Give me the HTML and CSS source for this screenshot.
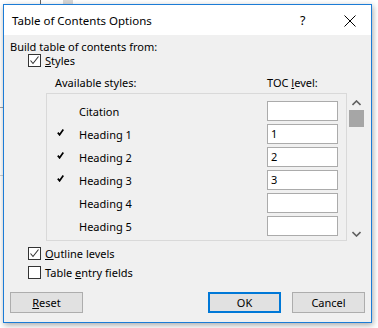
FILE: index.html
```html
<!DOCTYPE html>
<html>
<head>
<meta charset="utf-8">
<link rel="stylesheet" href="styles.css">
</head>
<body>
<div class="backdrop">
  <div class="bg-line bg-top1"></div>
  <div class="bg-line bg-top2"></div>
  <div class="bg-line bg-left1"></div>
  <div class="bg-line bg-left2"></div>
</div>
<div class="dialog">
  <div class="titlebar">
    <span class="title">Table of Contents Options</span>
    <span class="help">?</span>
    <svg class="close" width="12" height="12" viewBox="0 0 12 12"><path d="M0.5 0.5 L11.5 11.5 M11.5 0.5 L0.5 11.5" stroke="#000" stroke-width="1" fill="none"/></svg>
  </div>
  <div class="content">
    <div class="label-line">Build table of contents from:</div>
    <div class="check-row styles-row">
      <span class="box"><svg width="11" height="11" viewBox="0 0 11 11"><path d="M1.5 5.5 L4 8.5 L9.5 1.5" stroke="#333" stroke-width="1.1" fill="none"/></svg></span>
      <span><u>S</u>tyles</span>
    </div>
    <div class="col-heads">
      <span class="avail">Available styles:</span>
      <span class="toc">TOC <u>l</u>evel:</span>
    </div>
    <div class="list-wrap">
      <div class="list">
        <div class="row"><span class="mark"></span><span class="name">Citation</span><span class="field"></span></div>
        <div class="row"><span class="mark"><svg width="7" height="7" viewBox="0 0 7 7"><path d="M0.8 3.6 L2.6 5.8 L6.3 0.6" stroke="#000" stroke-width="1.7" fill="none"/></svg></span><span class="name">Heading 1</span><span class="field">1</span></div>
        <div class="row"><span class="mark"><svg width="7" height="7" viewBox="0 0 7 7"><path d="M0.8 3.6 L2.6 5.8 L6.3 0.6" stroke="#000" stroke-width="1.7" fill="none"/></svg></span><span class="name">Heading 2</span><span class="field">2</span></div>
        <div class="row"><span class="mark"><svg width="7" height="7" viewBox="0 0 7 7"><path d="M0.8 3.6 L2.6 5.8 L6.3 0.6" stroke="#000" stroke-width="1.7" fill="none"/></svg></span><span class="name">Heading 3</span><span class="field">3</span></div>
        <div class="row"><span class="mark"></span><span class="name">Heading 4</span><span class="field"></span></div>
        <div class="row"><span class="mark"></span><span class="name">Heading 5</span><span class="field"></span></div>
      </div>
      <div class="scrollbar">
        <svg class="arrow" width="9" height="6" viewBox="0 0 9 6"><path d="M0.5 5 L4.5 1 L8.5 5" stroke="#606060" stroke-width="1.6" fill="none"/></svg>
        <div class="thumb"></div>
        <div class="track"></div>
        <svg class="arrow" width="9" height="6" viewBox="0 0 9 6"><path d="M0.5 1 L4.5 5 L8.5 1" stroke="#606060" stroke-width="1.6" fill="none"/></svg>
      </div>
    </div>
    <div class="check-row outline-row">
      <span class="box"><svg width="11" height="11" viewBox="0 0 11 11"><path d="M1.5 5.5 L4 8.5 L9.5 1.5" stroke="#333" stroke-width="1.1" fill="none"/></svg></span>
      <span><u>O</u>utline levels</span>
    </div>
    <div class="check-row entry-row">
      <span class="box"></span>
      <span>Table <u>e</u>ntry fields</span>
    </div>
    <div class="buttons">
      <button class="btn"><u>R</u>eset</button>
      <span class="spacer"></span>
      <button class="btn ok">OK</button>
      <button class="btn">Cancel</button>
    </div>
  </div>
</div>
</body>
</html>
```

FILE: styles.css
```css
html, body {
  margin: 0;
  padding: 0;
}
body {
  width: 378px;
  height: 328px;
  background: #f4f4f4;
  overflow: hidden;
  position: relative;
  font-family: "Noto Sans", "Open Sans", sans-serif;
  font-size: 11px;
  color: #000;
}
.backdrop {
  position: absolute;
  left: 0;
  top: 0;
  width: 378px;
  height: 328px;
  background: #ffffff;
}
.bg-line { position: absolute; background: #a0a0a0; }
.bg-top1 { left: 40px; top: 0; width: 1px; height: 4px; background: #666; }
.bg-top2 { left: 63px; top: 0; width: 10px; height: 4px; background: #d6d6d6; }
.bg-left1 { left: 0; top: 107px; width: 3px; height: 1px; }
.bg-left2 { left: 0; top: 175px; width: 3px; height: 1px; background: #d0d0d0; }

.dialog {
  position: absolute;
  left: 3px;
  top: 4px;
  width: 367px;
  height: 317px;
  border: 1px solid #1c7cd6;
  background: #f0f0f0;
  box-shadow: 1px 2px 6px rgba(0,0,0,0.35);
  display: flex;
  flex-direction: column;
}
.titlebar {
  height: 30px;
  background: #fff;
  display: flex;
  align-items: center;
  position: relative;
}
.title {
  margin-left: 8px;
  font-size: 11.5px;
  padding-top: 1px;
}
.help {
  position: absolute;
  left: 296px;
  top: 7px;
  font-size: 12.5px;
}
.close {
  position: absolute;
  left: 340px;
  top: 10px;
}
.content {
  flex: 1;
  padding: 0 6px;
  display: flex;
  flex-direction: column;
}
.label-line {
  height: 14px;
  line-height: 14px;
  margin-top: 5px;
}
.check-row {
  display: flex;
  align-items: center;
  height: 13px;
  margin-left: 18px;
  gap: 4px;
}
.box {
  width: 11px;
  height: 11px;
  border: 1px solid #333;
  background: #fff;
  display: inline-flex;
  align-items: center;
  justify-content: center;
}
.box svg { display: block; }
.col-heads {
  height: 14px;
  line-height: 14px;
  margin-top: 9px;
  position: relative;
}
.avail { margin-left: 45px; }
.toc { position: absolute; left: 257px; }
.list-wrap {
  display: flex;
  margin-top: 3px;
  margin-left: 36px;
  height: 148px;
}
.list {
  width: 300px;
  border: 1px solid #d9d9d9;
  padding-top: 7px;
  box-sizing: content-box;
  height: 139px;
  display: flex;
  flex-direction: column;
  gap: 3px;
}
.row {
  height: 20px;
  display: flex;
  align-items: center;
}
.mark {
  width: 10px;
  height: 20px;
  margin-left: 10px;
  display: flex;
  align-items: center;
}
.mark svg { display: block; margin-top: -3px; }
.name {
  margin-left: 12px;
  width: 188px;
}
.field {
  height: 18px;
  border: 1px solid #ababab;
  background: #fff;
  line-height: 18px;
  padding-left: 3px;
  box-sizing: content-box;
  width: 66px;
}
.scrollbar {
  width: 17px;
  margin-left: 1px;
  display: flex;
  flex-direction: column;
  align-items: center;
}
.scrollbar .arrow { display: block; }
.scrollbar .arrow:first-child { margin-top: 7px; }
.scrollbar .arrow:last-child { margin-bottom: 4px; }
.thumb {
  width: 15px;
  height: 17px;
  background: #a6a6a6;
  margin-top: 4px;
}
.track { flex: 1; }
.outline-row { margin-top: 6px; }
.entry-row { margin-top: 6px; }
.buttons {
  display: flex;
  margin-top: 13px;
  height: 21px;
}
.btn {
  width: 73px;
  height: 21px;
  margin: 0;
  padding: 0;
  background: #e1e1e1;
  border: 1px solid #adadad;
  font-family: inherit;
  font-size: 11px;
  color: #000;
}
.spacer { flex: 1; }
.ok {
  border: 2px solid #0078d7;
  margin-right: 11px;
}
```
